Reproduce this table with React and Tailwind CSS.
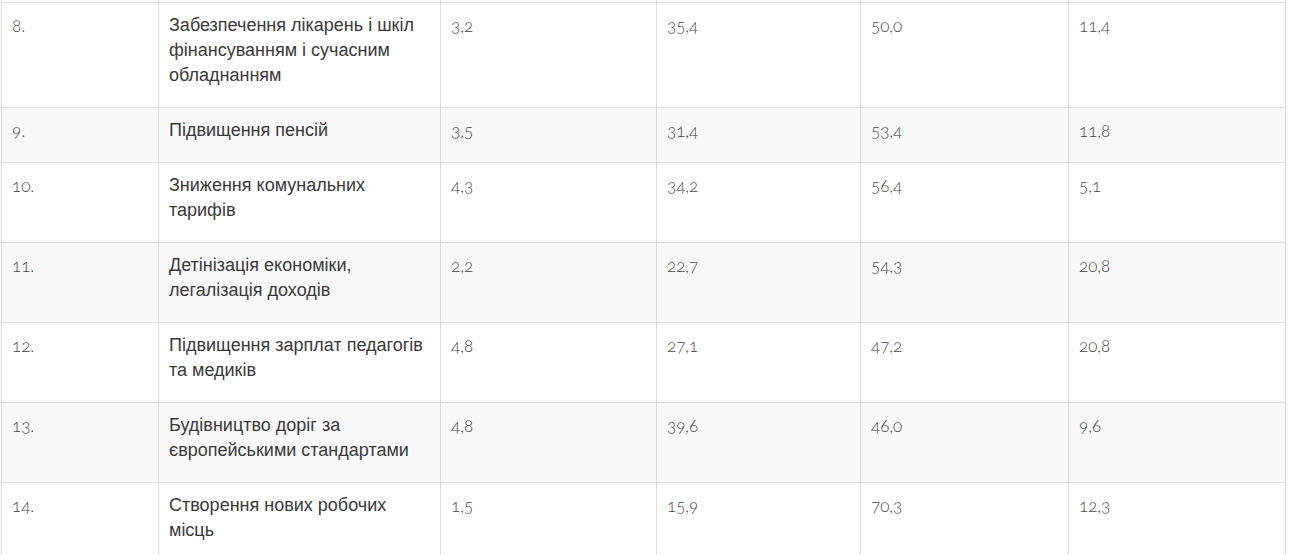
const rows = [
  { n: '8.', name: 'Забезпечення лікарень і шкіл фінансуванням і сучасним обладнанням', v: ['3,2', '35,4', '50,0', '11,4'] },
  { n: '9.', name: 'Підвищення пенсій', v: ['3,5', '31,4', '53,4', '11,8'] },
  { n: '10.', name: 'Зниження комунальних тарифів', v: ['4,3', '34,2', '56,4', '5,1'] },
  { n: '11.', name: 'Детінізація економіки, легалізація доходів', v: ['2,2', '22,7', '54,3', '20,8'] },
  { n: '12.', name: 'Підвищення зарплат педагогів та медиків', v: ['4,8', '27,1', '47,2', '20,8'] },
  { n: '13.', name: 'Будівництво доріг за європейськими стандартами', v: ['4,8', '39,6', '46,0', '9,6'] },
  { n: '14.', name: 'Створення нових робочих місць', v: ['1,5', '15,9', '70,3', '12,3'] },
]

const num = "font-['Lato',sans-serif] font-light [font-variant-numeric:oldstyle-nums] text-[17px] text-[#444]"
const cell = 'border border-[#dddddd] align-top pl-[10px] pr-[10px] pt-[10px] pb-[19px] leading-[25px]'

export default function App() {
  return (
    <div className="min-h-screen bg-white pl-px">
      <table className="w-[1285px] border-collapse table-fixed">
        <colgroup>
          <col className="w-[157px]" />
          <col className="w-[282px]" />
          <col className="w-[216px]" />
          <col className="w-[204px]" />
          <col className="w-[208px]" />
          <col className="w-[217px]" />
        </colgroup>
        <tbody>
          {/* tail of previous row */}
          <tr className="h-[2px]">
            {[0, 1, 2, 3, 4, 5].map((i) => (
              <td key={i} className="border-x border-[#dddddd] p-0 h-[2px]" />
            ))}
          </tr>
          {rows.map((r, i) => (
            <tr key={r.n} className={i % 2 === 1 ? 'bg-[#f9f9f9]' : 'bg-white'}>
              <td className={`${cell} ${num}`}>{r.n}</td>
              <td className={`${cell} font-['Liberation_Sans',Arial,sans-serif] text-[18px] text-[#3a3a3a]`}>{r.name}</td>
              {r.v.map((x, j) => (
                <td key={j} className={`${cell} ${num}`}>{x}</td>
              ))}
            </tr>
          ))}
        </tbody>
      </table>
    </div>
  )
}
